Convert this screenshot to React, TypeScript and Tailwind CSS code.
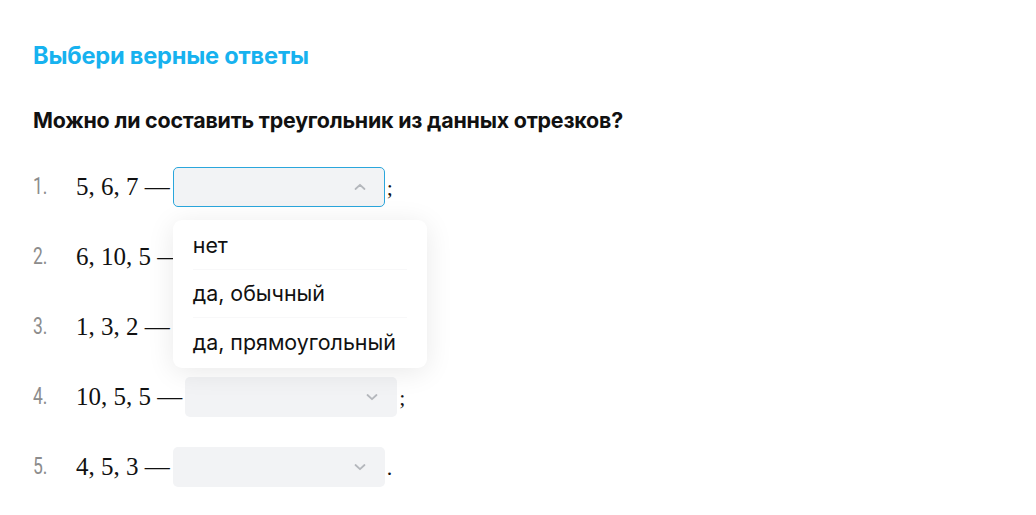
import { useState } from "react";

const OPTIONS = ["нет", "да, обычный", "да, прямоугольный"];

interface Task {
  id: number;
  sides: string;
  end: string;
}

const TASKS: Task[] = [
  { id: 1, sides: "5, 6, 7", end: ";" },
  { id: 2, sides: "6, 10, 5", end: ";" },
  { id: 3, sides: "1, 3, 2", end: ";" },
  { id: 4, sides: "10, 5, 5", end: ";" },
  { id: 5, sides: "4, 5, 3", end: "." },
];

function Chevron({ up }: { up: boolean }) {
  return (
    <svg width="14" height="14" viewBox="0 0 14 14" fill="none" className="text-[#b4b7bc]">
      <path
        d={up ? "M2.5 9L7 4.8L11.5 9" : "M2.5 5L7 9.2L11.5 5"}
        stroke="currentColor"
        strokeWidth="1.8"
        strokeLinecap="round"
        strokeLinejoin="round"
      />
    </svg>
  );
}

function Select({ open }: { open: boolean }) {
  return (
    <div className="relative">
      <div
        className={
          open
            ? "flex h-[40px] w-[212px] items-center justify-end rounded-[5px] border border-[#2aa6dc] bg-[#f2f3f5] pr-[17px]"
            : "flex h-[40px] w-[212px] items-center justify-end rounded-[5px] border border-transparent bg-[#f2f3f5] pr-[17px]"
        }
      >
        <Chevron up={open} />
      </div>
      {open && (
        <ul className="absolute left-0 top-[53px] z-10 w-[254px] rounded-[9px] bg-white py-[2px] shadow-[0_4px_28px_rgba(0,0,0,0.09)]">
          {OPTIONS.map((o, i) => (
            <li key={o} className="px-[20px]">
              <div
                className={
                  i < OPTIONS.length - 1
                    ? "flex h-[48px] items-center border-b border-[#f8f8f9] text-[21.4px] text-[#111]"
                    : "flex h-[48px] items-center text-[21.4px] text-[#111]"
                }
              >
                {o}
              </div>
            </li>
          ))}
        </ul>
      )}
    </div>
  );
}

export default function App() {
  const [openId] = useState(1);

  return (
    <div className="min-h-[515px] bg-white pl-[33px] pt-[40px] font-['Inter','Roboto',sans-serif]">
      <h2 className="text-[23.6px] font-bold leading-[32px] tracking-[-0.2px] text-[#17b2ef]">
        Выбери верные ответы
      </h2>
      <p className="mt-[34px] text-[21.4px] font-bold leading-[28px] tracking-[-0.2px] text-[#111]">
        Можно ли составить треугольник из данных отрезков?
      </p>

      <ol className="mt-[33px] flex flex-col gap-[30px]">
        {TASKS.map((t) => (
          <li key={t.id} className="flex h-[40px] items-center">
            <span className="w-[43px] origin-left font-['Roboto',sans-serif] text-[23px] text-[#8c8c8c] [transform:scaleX(0.76)]">
              {t.id}.
            </span>
            <span className="whitespace-pre font-['Liberation_Serif',serif] text-[25px] text-[#111]">
              {t.sides} —
            </span>
            <span className="ml-[3px]">
              <Select open={openId === t.id} />
            </span>
            <span className="ml-[2px] font-['Liberation_Serif',serif] text-[22px] text-[#111]">
              {t.end}
            </span>
          </li>
        ))}
      </ol>
    </div>
  );
}
